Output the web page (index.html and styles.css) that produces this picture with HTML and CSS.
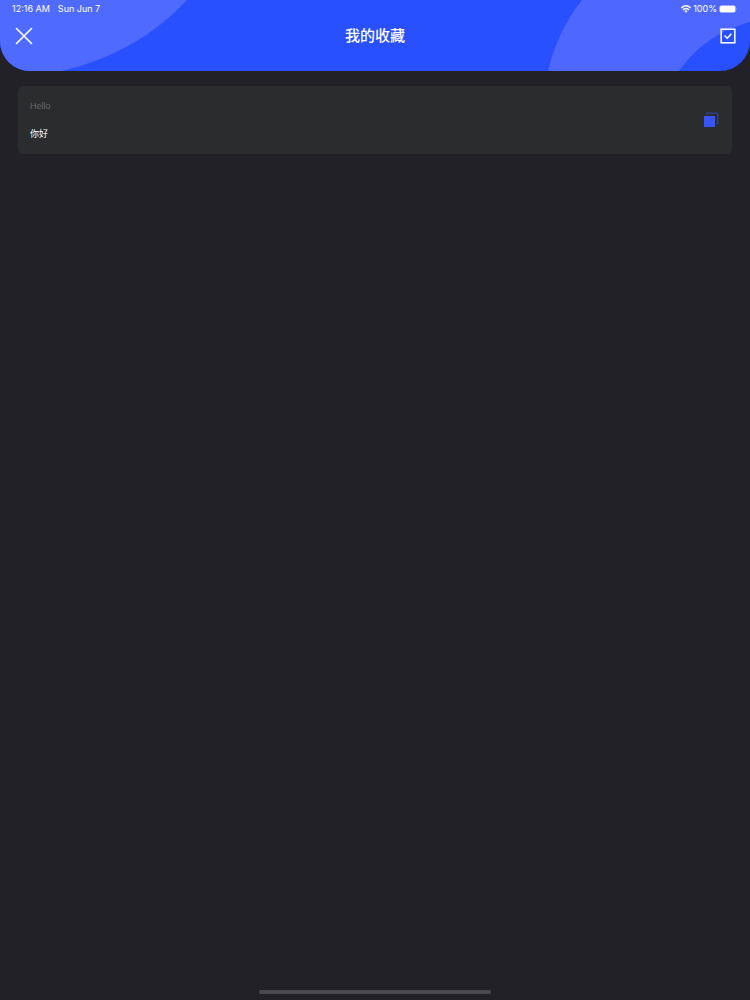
FILE: index.html
```html
<!DOCTYPE html>
<html lang="zh-CN">
<head>
<meta charset="utf-8">
<meta name="viewport" content="width=device-width, initial-scale=1">
<title>我的收藏</title>
<link rel="stylesheet" href="styles.css">
</head>
<body>
<header class="header">
  <svg class="shape shape-left" width="190" height="71" viewBox="0 0 190 71" aria-hidden="true"><path d="M0 0H187Q138 53 62 71H0Z" fill="#4f6bff"/></svg>
  <svg class="shape shape-right" width="204" height="71" viewBox="0 0 204 71" aria-hidden="true"><path d="M36 0H204V22Q159 34 133 71H2Q12 30 36 0Z" fill="#4e68ff"/></svg>
  <div class="status">
    <div class="status-group status-time"><span>12:16 AM</span><span>Sun Jun 7</span></div>
    <div class="status-group">
      <svg width="10" height="8" viewBox="0 0 10 8" fill="none" stroke="#fff" stroke-width="1.5" aria-hidden="true"><path d="M.4 3Q5-1.4 9.6 3M2 4.9Q5 2 8 4.9"/><path d="M3.3 6Q5 4.6 6.7 6L5 7.8Z" fill="#fff" stroke="none"/></svg>
      <span>100%</span>
      <svg width="19" height="8" viewBox="0 0 19 8" aria-hidden="true"><rect x=".5" y=".5" width="16" height="7" rx="2" fill="none" stroke="#fff" stroke-opacity=".45"/><rect x="1" y="1" width="15" height="6" rx="1.2" fill="#fff"/><path d="M17.5 2.8Q18.7 4 17.5 5.2Z" fill="#fff" opacity=".5"/></svg>
    </div>
  </div>
  <div class="bar">
    <button class="icon-button" type="button" aria-label="关闭"><svg width="18" height="18" viewBox="0 0 18 18" fill="none" stroke="#fff" stroke-width="1.6" stroke-linecap="round"><path d="M1.5 1.5 16.5 16.5M16.5 1.5 1.5 16.5"/></svg></button>
    <h1 class="title">我的收藏</h1>
    <button class="icon-button" type="button" aria-label="选择"><svg width="16" height="16" viewBox="0 0 16 16" fill="none" stroke="#fff" stroke-width="1.5"><rect x="1.2" y="1.2" width="13.6" height="13.6"/><path d="m4.6 7.6 2.6 2.6 4.2-4.4"/></svg></button>
  </div>
</header>
<main class="content">
  <article class="card">
    <div class="phrase">
      <p class="source" lang="en">Hello</p>
      <p class="translation">你好</p>
    </div>
    <button class="icon-button" type="button" aria-label="复制"><svg width="16" height="16" viewBox="0 0 16 16"><path d="M4 3V1.2H13.3Q14.8 1.2 14.8 2.7V12H13" fill="none" stroke="#2f439f" stroke-width="1.2"/><rect x="1" y="4" width="11" height="11" fill="#3654fa"/></svg></button>
  </article>
</main>
<div class="home-indicator"></div>
</body>
</html>
```
FILE: styles.css
```css
* {
  box-sizing: border-box;
}

body {
  margin: 0;
  min-height: 100vh;
  display: flex;
  flex-direction: column;
  background: #222128;
  color: #fff;
  font-family: Inter, "Noto Sans CJK SC", sans-serif;
}

.header {
  position: relative;
  overflow: hidden;
  padding: 3px 12px 23px;
  border-radius: 0 0 30px 30px;
  background: #2850ff;
}

.shape {
  position: absolute;
  top: 0;
}

.shape-left {
  left: 0;
}

.shape-right {
  right: 0;
}

.status,
.bar {
  position: relative;
  display: flex;
  align-items: center;
  justify-content: space-between;
}

.status {
  font-size: 9px;
  line-height: 12px;
}

.status-group {
  display: flex;
  align-items: center;
  gap: 2px;
}

.status-time {
  gap: 8px;
}

.bar {
  margin: 0 -2px 0 0;
  padding-top: 9px;
}

.icon-button {
  display: grid;
  place-items: center;
  width: 24px;
  height: 24px;
  padding: 0;
  border: 0;
  background: none;
}

.title {
  margin: 0;
  padding-right: 2px;
  font-size: 15px;
  line-height: 24px;
  font-weight: 500;
}

.content {
  flex: 1;
  padding: 15px 18px;
}

.card {
  display: flex;
  align-items: center;
  justify-content: space-between;
  padding: 12px 9px 12px 12px;
  border-radius: 6px;
  background: #2b2c2e;
}

.phrase {
  display: grid;
  gap: 12px;
  font-size: 9px;
  line-height: 16px;
}

.phrase p {
  margin: 0;
}

.source {
  color: #656569;
  font-family: "Liberation Sans", Arial, sans-serif;
}

.home-indicator {
  align-self: center;
  width: 31%;
  height: 4px;
  margin-bottom: 6px;
  border-radius: 2px;
  background: #4b4a50;
}
```
